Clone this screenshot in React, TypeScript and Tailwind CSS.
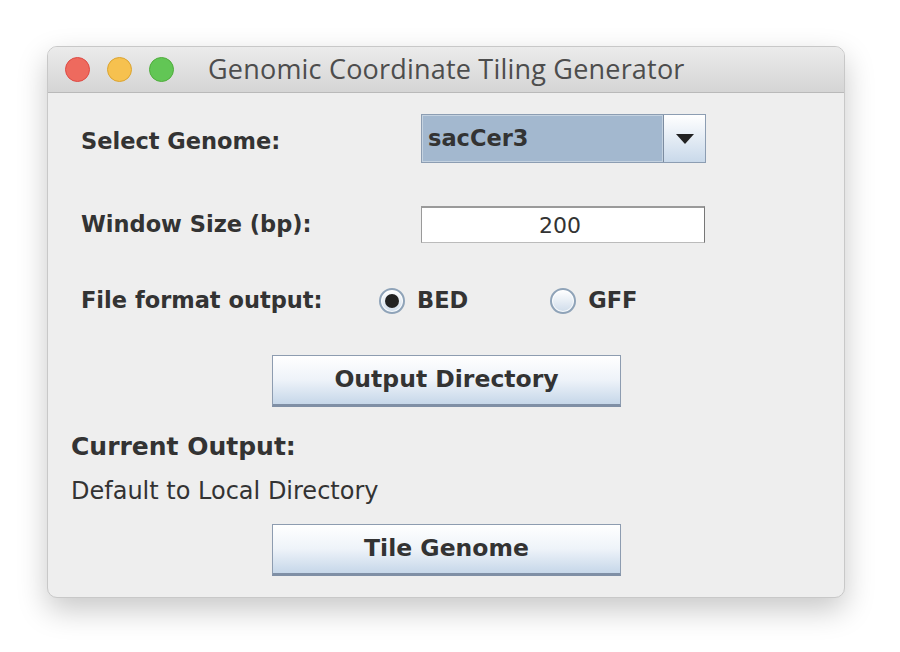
import type { FC } from "react";

const label = "font-['DejaVu_Sans',sans-serif] font-bold text-[22.5px] text-[#333333]";

const Radio: FC<{ checked?: boolean; text: string }> = ({ checked, text }) => (
	<div className="flex items-center gap-[12px]">
		<div className="flex h-[26px] w-[26px] items-center justify-center rounded-full border-[2px] border-[#8fa3b8] bg-gradient-to-b from-white to-[#cfdcea] shadow-[inset_0_0_0_1px_rgba(255,255,255,0.8)]">
			{checked && <div className="h-[14px] w-[14px] rounded-full bg-[#222222]" />}
		</div>
		<span className={label}>{text}</span>
	</div>
);

const JButton: FC<{ text: string }> = ({ text }) => (
	<button className="flex h-[52px] w-[349px] items-center justify-center border border-[#8d9cb0] border-b-[3px] border-b-[#7f8fa5] bg-gradient-to-b from-white via-[#eef3f9] to-[#c6d7e9]">
		<span className="font-['DejaVu_Sans',sans-serif] font-bold text-[23.5px] text-[#333333]">{text}</span>
	</button>
);

export default function App() {
	return (
		<div className="h-[652px] w-[900px] bg-white pt-[46px] pl-[47px]">
			<div className="flex h-[552px] w-[798px] flex-col overflow-hidden rounded-[10px] border border-[#c8c8c8] bg-[#eeeeee] shadow-[0_12px_30px_rgba(0,0,0,0.22)]">
				{/* Title bar */}
				<div className="flex h-[46px] shrink-0 items-center border-b border-[#b9b9b9] bg-gradient-to-b from-[#ebebeb] to-[#d5d5d5] pl-[17px]">
					<div className="flex gap-[17px]">
						<div className="h-[25px] w-[25px] rounded-full border border-[#de4a44] bg-[#ee6a5e]" />
						<div className="h-[25px] w-[25px] rounded-full border border-[#dba431] bg-[#f6c14f]" />
						<div className="h-[25px] w-[25px] rounded-full border border-[#4fad3c] bg-[#62c655]" />
					</div>
					<span className="ml-[34px] font-['Open_Sans',sans-serif] text-[27px] tracking-[0.2px] text-[#4d4d4d]">
						Genomic Coordinate Tiling Generator
					</span>
				</div>

				{/* Body */}
				<div className="flex flex-col pt-[21px]">
					<div className="flex items-center">
						<span className={`${label} w-[373px] pt-[6px] pl-[33px]`}>Select Genome:</span>
						<div className="flex h-[49px] w-[285px] border border-[#8c9db2]">
							<div className="flex flex-1 items-center border border-[#c4d2e0] bg-[#a3b8cf] pl-[5px]">
								<span className={label}>sacCer3</span>
							</div>
							<div className="flex w-[42px] items-center justify-center border-l border-[#7c8ca0] bg-gradient-to-b from-white to-[#c9d9ea]">
								<svg width="20" height="12" viewBox="0 0 20 12">
									<path d="M1 1 H19 L10 11 Z" fill="#222222" />
								</svg>
							</div>
						</div>
					</div>

					<div className="mt-[43px] flex items-center">
						<span className={`${label} w-[373px] pl-[33px]`}>Window Size (bp):</span>
						<div className="flex h-[37px] w-[284px] items-center justify-center border border-t-[2px] border-[#9a9a9a] border-r-[#777777] border-b-[#bbbbbb] bg-white pr-[6px]">
							<span className="font-['DejaVu_Sans',sans-serif] text-[22px] text-[#333333]">200</span>
						</div>
					</div>

					<div className="mt-[41px] flex items-center">
						<span className={`${label} w-[331px] pl-[33px]`}>File format output:</span>
						<Radio checked text="BED" />
						<div className="ml-[82px]">
							<Radio text="GFF" />
						</div>
					</div>

					<div className="mt-[37px] flex pl-[224px]">
						<JButton text="Output Directory" />
					</div>

					<div className="mt-[25px] pl-[23px]">
						<div className="font-['DejaVu_Sans',sans-serif] font-bold text-[25px] leading-[30px] text-[#333333]">
							Current Output:
						</div>
						<div className="mt-[14px] font-['DejaVu_Sans',sans-serif] text-[24px] leading-[30px] text-[#333333]">
							Default to Local Directory
						</div>
					</div>

					<div className="mt-[18px] flex pl-[224px]">
						<JButton text="Tile Genome" />
					</div>
				</div>
			</div>
		</div>
	);
}
